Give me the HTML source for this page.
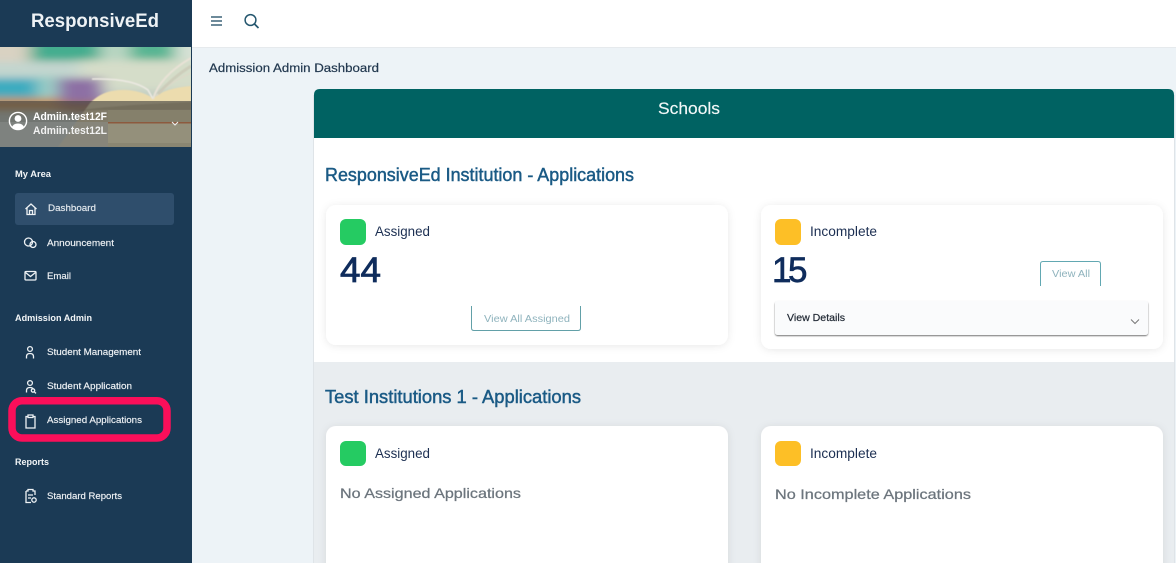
<!DOCTYPE html>
<html lang="en"><head><meta charset="utf-8"><title>Admission Admin Dashboard</title>
<style>
html,body{margin:0;padding:0;width:1176px;height:563px;overflow:hidden;background:#edf3f7}
svg{display:block}
text{font-family:"Liberation Sans",sans-serif}
</style></head><body>
<svg width="1176" height="563" viewBox="0 0 1176 563" xmlns="http://www.w3.org/2000/svg">
<defs>
<filter id="b6" x="-30%" y="-30%" width="160%" height="160%"><feGaussianBlur stdDeviation="8 4"/></filter>
<filter id="b1" x="-10%" y="-10%" width="120%" height="120%"><feGaussianBlur stdDeviation=".6"/></filter>
<filter id="sh" x="-5%" y="-10%" width="110%" height="125%"><feDropShadow dx="0" dy="1" stdDeviation="4" flood-color="#000" flood-opacity=".09"/></filter>
<filter id="sh2" x="-3%" y="-10%" width="106%" height="125%"><feDropShadow dx="0" dy="1" stdDeviation=".8" flood-color="#000" flood-opacity=".55"/></filter>
<clipPath id="bn"><rect x="0" y="47" width="191" height="100"/></clipPath>
</defs>

<rect width="1176" height="563" fill="#edf3f7"/>
<rect x="192" width="984" height="47" fill="#fff"/>
<rect x="192" y="47" width="984" height="1" fill="#e6eaed"/>

<!-- sidebar -->
<rect width="192" height="563" fill="#1b3a55"/>
<text x="31" y="27" font-size="19" font-weight="700" fill="#eef2f5" textLength="128" lengthAdjust="spacingAndGlyphs">ResponsiveEd</text>

<!-- banner -->
<g clip-path="url(#bn)">
<rect x="0" y="47" width="191" height="100" fill="#c4cfc4"/>
<g filter="url(#b6)">
<rect x="-30" y="30" width="60" height="32" fill="#d9d2c2"/>
<rect x="30" y="30" width="70" height="31" fill="#45ad8f"/>
<rect x="100" y="30" width="30" height="30" fill="#b9d6c2"/>
<rect x="130" y="30" width="45" height="30" fill="#58b593"/>
<rect x="175" y="30" width="40" height="30" fill="#d7e2d6"/>
<rect x="-30" y="62" width="110" height="16" fill="#c3d6cf"/>
<rect x="80" y="60" width="130" height="30" fill="#d5ddc9"/>
<rect x="-30" y="78" width="68" height="21" fill="#3cacc0"/>
<rect x="38" y="76" width="22" height="22" fill="#9ecfc6"/>
<rect x="58" y="78" width="44" height="28" fill="#8d6fa4"/>
<rect x="-30" y="98" width="90" height="12" fill="#c98f4c"/>
<rect x="60" y="102" width="50" height="10" fill="#a8734e"/>
</g>
<path d="M58 147 L90 103 Q100 93 112 91 Q135 87 153 98 Q165 88 191 86 V147Z" fill="#ecdcae" filter="url(#b1)"/>
<g fill="none" filter="url(#b1)">
<path d="M92 79 Q132 78 148 90 L153 99" stroke="#ece9e2" stroke-width="1.6"/>
<path d="M153 99 Q160 76 191 58" stroke="#e8e2d6" stroke-width="2"/>
<path d="M156 96 Q170 82 191 73" stroke="#dcd8c8" stroke-width="1.4"/>
<path d="M158 94 Q172 78 191 66" stroke="#c7c3b0" stroke-width="3" opacity=".6"/>
</g>
<rect x="0" y="101" width="191" height="46" fill="#3f3f3f" fill-opacity=".62"/>
<rect x="0" y="122" width="108" height="25" fill="#8d9290" fill-opacity=".45"/>
<path d="M70 111 Q110 106 150 104 L191 102 V110 H108Z" fill="#4f4838" opacity=".25" filter="url(#b1)"/>
<rect x="108" y="110" width="83" height="12" fill="#85806b"/>
<rect x="108" y="122" width="83" height="1.500" fill="#8d5a3e"/>
<rect x="108" y="123.500" width="83" height="19.500" fill="#94907b"/>
<rect x="108" y="143" width="83" height="4" fill="#8a8672"/>
</g>
<circle cx="18" cy="121" r="8.600" fill="none" stroke="#fff" stroke-width="1.400"/>
<circle cx="18" cy="118.500" r="3.400" fill="#fff"/>
<path d="M12 127.500 Q13 123.500 18 123.500 Q23 123.500 24 127.500 Q18 131.500 12 127.500Z" fill="#fff"/>
<text x="33" y="120" font-size="11" font-weight="700" fill="#fff" textLength="74" lengthAdjust="spacingAndGlyphs">Admiin.test12F</text>
<text x="33" y="134" font-size="11" font-weight="700" fill="#f2f2f2" textLength="74" lengthAdjust="spacingAndGlyphs">Admiin.test12L</text>
<path d="M172 122 L175 125 L178 122" fill="none" stroke="#eee" stroke-width="1.100"/>

<text x="15" y="177" font-size="9.500" font-weight="700" fill="#f2f5f7" textLength="36" lengthAdjust="spacingAndGlyphs">My Area</text>
<rect x="15" y="193" width="159" height="32" rx="3" fill="#2f4e6c"/>
<g fill="none" stroke="#eef2f5" stroke-width="1.300">
<path d="M25.500 209 L31 204 L36.500 209 M27 208 V214.500 H35 V208 M29.500 214.500 V210.500 H32.500 V214.500"/>
<circle cx="28.500" cy="242" r="4"/><circle cx="33" cy="244.500" r="3"/>
<rect x="25" y="271.500" width="11" height="8.500" rx="1"/><path d="M25.500 272.500 L30.500 276.500 L35.500 272.500"/>
</g>
<g font-size="9.500" fill="#f0f3f6" stroke="#f0f3f6" stroke-width=".15">
<text x="48" y="211" textLength="48" lengthAdjust="spacingAndGlyphs" fill="#dfe6ec">Dashboard</text>
<text x="47" y="246" textLength="67" lengthAdjust="spacingAndGlyphs">Announcement</text>
<text x="47" y="279" textLength="24" lengthAdjust="spacingAndGlyphs">Email</text>
</g>
<text x="15" y="321" font-size="9.500" font-weight="700" fill="#f2f5f7" textLength="77" lengthAdjust="spacingAndGlyphs">Admission Admin</text>

<g fill="none" stroke="#eef2f5" stroke-width="1.300">
<circle cx="30" cy="349" r="2.400"/><path d="M26.500 358.500 V356.500 Q26.500 353.500 30 353.500 Q33.500 353.500 33.500 356.500 V358.500"/>
<circle cx="30" cy="383" r="2.400"/><path d="M26.500 392.500 V390.500 Q26.500 387.500 30 387.500 Q32 387.500 33 388.500"/><circle cx="33" cy="390.500" r="1.700"/><path d="M34.300 391.800 L36 393.400"/>
<path d="M27.500 416.500 H26 V428 H35 V416.500 H33.500 M28 417.500 V415 H33 V417.500 H28Z"/>
<path d="M26 491 H28 V489.500 H33 V491 H35 V495 M28 489.500 V491 M26 491 V502.500 H31 M28 495 H33 M28 498 H31"/><circle cx="34" cy="500" r="2.200"/>
</g>
<g font-size="9.500" fill="#f0f3f6" stroke="#f0f3f6" stroke-width=".15">
<text x="47" y="355" textLength="94" lengthAdjust="spacingAndGlyphs">Student Management</text>
<text x="47" y="389" textLength="85" lengthAdjust="spacingAndGlyphs">Student Application</text>
<text x="47" y="423" textLength="95" lengthAdjust="spacingAndGlyphs">Assigned Applications</text>
<text x="47" y="499" textLength="75" lengthAdjust="spacingAndGlyphs">Standard Reports</text>
</g>
<text x="15" y="465" font-size="9.500" font-weight="700" fill="#f2f5f7" textLength="34" lengthAdjust="spacingAndGlyphs">Reports</text>
<rect x="12" y="400.700" width="155" height="37.300" rx="10" fill="none" stroke="#fb0f5a" stroke-width="7.500"/>

<!-- topbar icons -->
<path d="M211 17 H222 M211 21 H222 M211 25 H222" stroke="#3d6478" stroke-width="1.400"/>
<circle cx="250.500" cy="20" r="5.400" fill="none" stroke="#24566e" stroke-width="1.500"/>
<path d="M254.500 24 L258.500 28" stroke="#24566e" stroke-width="1.700"/>

<text x="209" y="72" font-size="11.500" fill="#22384f" stroke="#22384f" stroke-width=".2" textLength="170" lengthAdjust="spacingAndGlyphs">Admission Admin Dashboard</text>

<!-- main panel -->
<path d="M314 563 V95 Q314 89 320 89 H1168 Q1174 89 1174 95 V563Z" fill="#fff"/>
<rect x="314" y="362" width="860" height="201" fill="#e9edf0"/>
<path d="M314 138 V95 Q314 89 320 89 H1168 Q1174 89 1174 95 V138Z" fill="#006262"/>
<rect x="313" y="95" width="1" height="468" fill="#dfe4e8"/>
<rect x="1174" y="95" width="1" height="468" fill="#dfe4e8"/>
<text x="658" y="114" font-size="17" fill="#f2f8f8" stroke="#f2f8f8" stroke-width=".15" textLength="62" lengthAdjust="spacingAndGlyphs">Schools</text>

<text x="325" y="181" font-size="18" fill="#1a5a85" stroke="#1a5a85" stroke-width=".45" textLength="309" lengthAdjust="spacingAndGlyphs">ResponsiveEd Institution - Applications</text>
<text x="325" y="403" font-size="18" fill="#1a5a85" stroke="#1a5a85" stroke-width=".45" textLength="256" lengthAdjust="spacingAndGlyphs">Test Institutions 1 - Applications</text>

<!-- cards -->
<rect x="326" y="205" width="402" height="140" rx="10" fill="#fff" filter="url(#sh)"/>
<rect x="761" y="205" width="402" height="144" rx="10" fill="#fff" filter="url(#sh)"/>
<rect x="326" y="426" width="402" height="160" rx="10" fill="#fff" filter="url(#sh)"/>
<rect x="761" y="426" width="402" height="160" rx="10" fill="#fff" filter="url(#sh)"/>

<rect x="340" y="219" width="26" height="26" rx="6" fill="#25cb62"/>
<rect x="775" y="219" width="26" height="26" rx="6" fill="#fdbf26"/>
<rect x="340" y="441" width="26" height="25" rx="6" fill="#25cb62"/>
<rect x="775" y="441" width="26" height="25" rx="6" fill="#fdbf26"/>

<g font-size="13.500" fill="#1c2f52">
<text x="375" y="236" textLength="55" lengthAdjust="spacingAndGlyphs">Assigned</text>
<text x="810" y="236" textLength="67" lengthAdjust="spacingAndGlyphs">Incomplete</text>
<text x="375" y="458" textLength="55" lengthAdjust="spacingAndGlyphs">Assigned</text>
<text x="810" y="458" textLength="67" lengthAdjust="spacingAndGlyphs">Incomplete</text>
</g>

<text x="340" y="282" font-size="35" fill="#0f2c5c" stroke="#0f2c5c" stroke-width=".8" textLength="41" lengthAdjust="spacingAndGlyphs">44</text>
<text x="772 788" y="282" font-size="35" fill="#0f2c5c" stroke="#0f2c5c" stroke-width=".7">15</text>

<path d="M471.500 306 V328 Q471.500 330.500 474 330.500 H578 Q580.500 330.500 580.500 328 V306" fill="none" stroke="#62a0a8" stroke-width="1"/>
<text x="484" y="322" font-size="10.500" fill="#8fb3bd" textLength="86" lengthAdjust="spacingAndGlyphs">View All Assigned</text>
<path d="M1040.500 286 V264 Q1040.500 261.500 1043 261.500 H1098 Q1100.500 261.500 1100.500 264 V286" fill="none" stroke="#62a8b2" stroke-width="1"/>
<text x="1052" y="277" font-size="10.500" fill="#8fb3bd" textLength="38" lengthAdjust="spacingAndGlyphs">View All</text>

<rect x="775" y="301" width="373" height="34" rx="2.500" fill="#fafbfc" filter="url(#sh2)"/>
<text x="787" y="321" font-size="10" fill="#222a35" stroke="#222a35" stroke-width=".2" textLength="58" lengthAdjust="spacingAndGlyphs">View Details</text>
<path d="M1131 319.500 L1135 323.500 L1139 319.500" fill="none" stroke="#777" stroke-width="1"/>

<text x="340" y="498" font-size="14" fill="#6c757d" stroke="#6c757d" stroke-width=".25" textLength="181" lengthAdjust="spacingAndGlyphs">No Assigned Applications</text>
<text x="775" y="499" font-size="14" fill="#6c757d" stroke="#6c757d" stroke-width=".25" textLength="196" lengthAdjust="spacingAndGlyphs">No Incomplete Applications</text>
</svg>
</body></html>
